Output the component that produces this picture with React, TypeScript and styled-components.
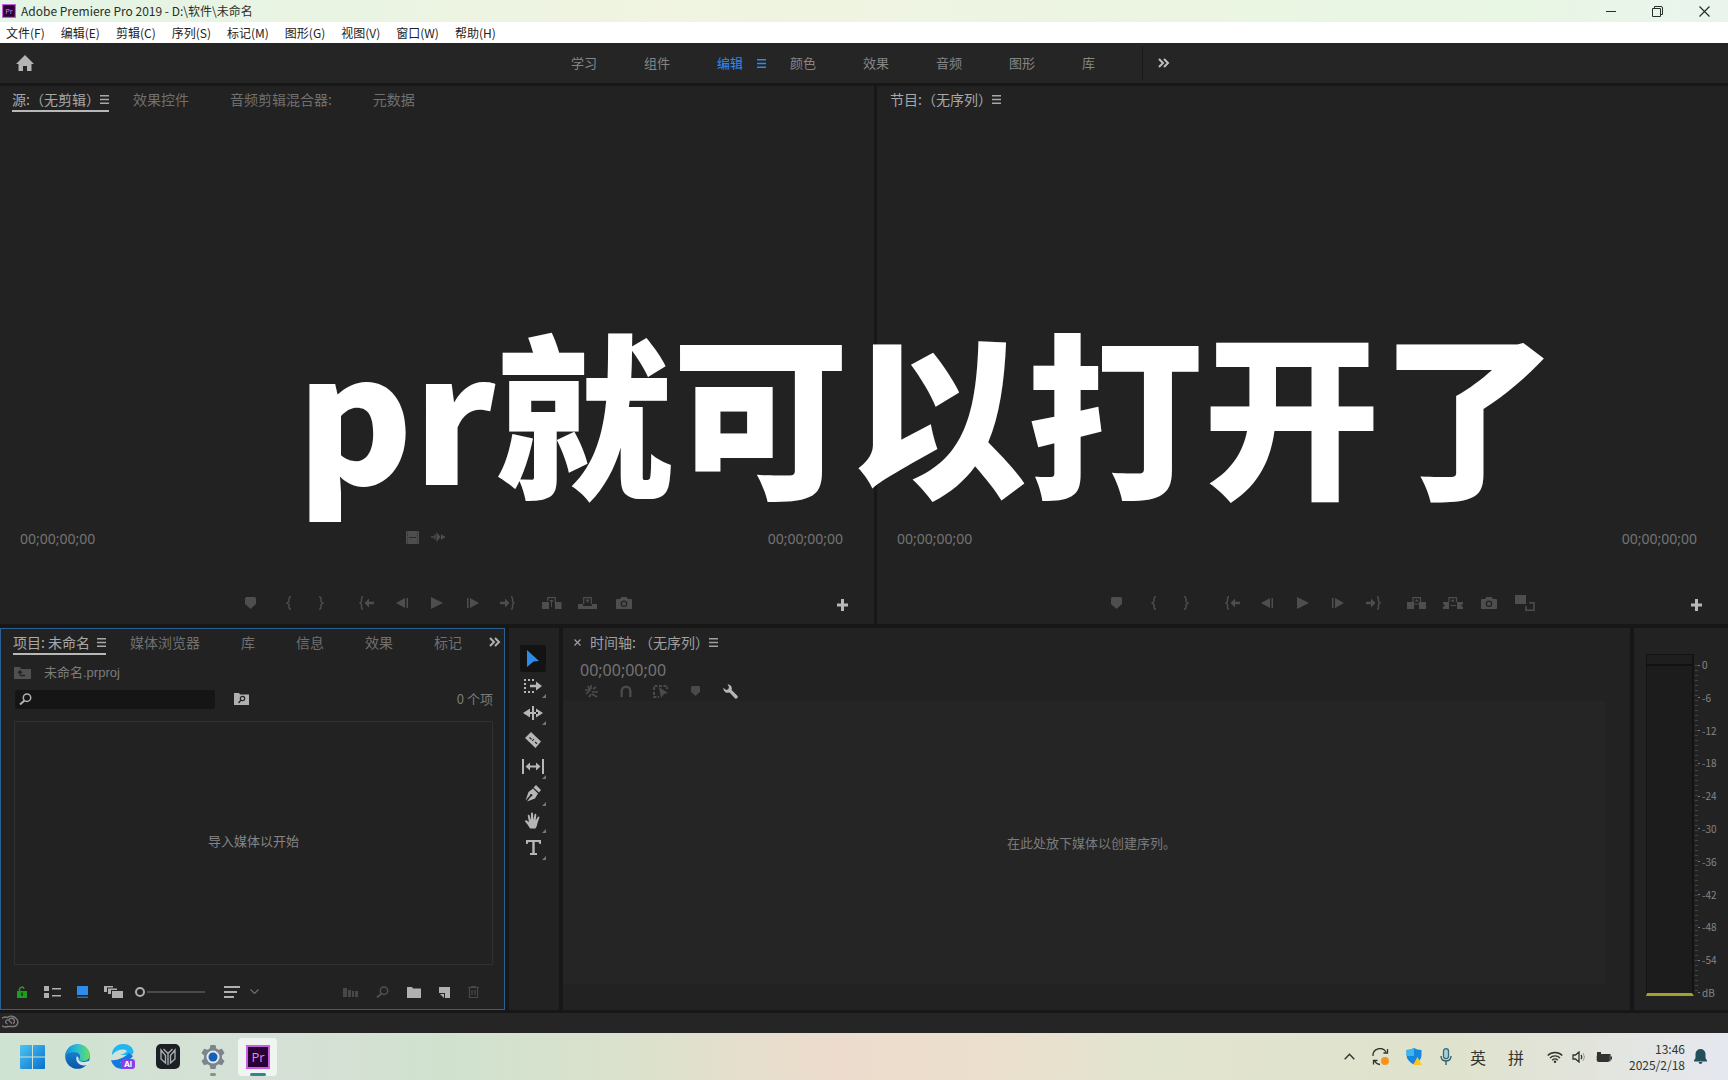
import React from 'react';
import styled, { createGlobalStyle, css } from 'styled-components';

const SANS = '"Noto Sans CJK SC", "Noto Sans", sans-serif';
const LATIN_FIRST = '"Noto Sans", "Noto Sans CJK SC", sans-serif';

const GlobalStyle = createGlobalStyle`
  * { box-sizing: border-box; }
  html, body { margin: 0; padding: 0; background: #171717; }
  body { font-family: ${SANS}; font-size: 14px; line-height: 20px; color: #8a8a8a; overflow: hidden; }
  button, input { font: inherit; color: inherit; border: 0; padding: 0; margin: 0; background: none; }
  svg { display: block; flex: none; }
`;

const Desktop = styled.div`
  position: relative;
  display: flex;
  flex-direction: column;
  width: 100%;
  height: 100vh;
`;

/* ---------- window chrome ---------- */
const TitleBar = styled.header`
  flex: none;
  display: flex;
  align-items: center;
  height: 22px;
  padding-left: 2px;
  background: linear-gradient(90deg, #e4f4e6, #f0f4e0 38%, #ecf5e2 65%, #e8f6e4 88%, #eaf4ee);
  color: #2a2e2a;
  font-size: 12px;
`;
const WindowTitle = styled.h1`
  margin: 0 0 0 5px;
  flex: 1;
  font-size: 12px;
  font-weight: 400;
  line-height: 20px;
`;
const WindowButton = styled.button`
  display: flex;
  align-items: center;
  justify-content: center;
  width: 47px;
  height: 22px;
`;
const MenuBar = styled.nav`
  flex: none;
  display: flex;
  align-items: center;
  gap: 16px;
  height: 21px;
  padding-left: 6px;
  background: #fff;
  color: #222;
  font-size: 12px;
`;
const MenuButton = styled.button`
  white-space: nowrap;
`;

/* ---------- workspace bar ---------- */
const WorkspaceBar = styled.div`
  flex: none;
  display: grid;
  grid-template-columns: 543fr 599fr 586fr;
  align-items: center;
  height: 40px;
  margin-bottom: 3px;
  background: #252525;
`;
const HomeButton = styled.button`
  width: 20px;
  height: 24px;
  margin-left: 15px;
  color: #b4b4b4;
`;
const Workspaces = styled.div`
  display: flex;
  align-items: center;
  padding-left: 28px;
  font-size: 13px;
`;
const WorkspaceTab = styled.button<{ $active?: boolean }>`
  display: flex;
  flex: none;
  align-items: center;
  gap: 14px;
  width: 73px;
  color: ${(p) => (p.$active ? '#2d8ceb' : '#858585')};
  &:last-child { width: 40px; }
`;
const WorkspaceMore = styled.button`
  display: flex;
  align-items: center;
  height: 34px;
  padding-left: 15px;
  border-left: 1px solid #1a1a1a;
  color: #c0c0c0;
`;

/* ---------- panels ---------- */
const Panel = styled.section`
  display: flex;
  flex-direction: column;
  min-width: 0;
  background: #222;
`;
const MonitorRow = styled.div`
  flex: 538 1 0;
  display: grid;
  grid-template-columns: 874fr 851fr;
  gap: 3px;
  min-height: 0;
`;
const EditRow = styled.div`
  flex: 382 1 0;
  display: grid;
  grid-template-columns: minmax(0, 505fr) 50px minmax(0, 1067fr) 94px;
  column-gap: 4px;
  min-height: 0;
  margin: 4px 0 3px;
`;
const PanelTabs = styled.div<{ $inset?: number }>`
  flex: none;
  display: flex;
  align-items: flex-start;
  gap: 24px;
  height: 27px;
  padding-left: ${(p) => p.$inset ?? 12}px;
`;
const PanelTab = styled.button<{ $active?: boolean; $line?: boolean; $gap?: number }>`
  display: flex;
  align-items: center;
  gap: ${(p) => p.$gap ?? 0}px;
  height: 26px;
  padding-top: 2px;
  padding-right: ${(p) => (p.$active ? 0 : 17)}px;
  border-bottom: 2px solid ${(p) => (p.$line ? '#b8b8b8' : 'transparent')};
  color: ${(p) => (p.$active ? '#a8a8a8' : '#707070')};
  white-space: nowrap;
`;
const MoreTabs = styled.button`
  margin: 8px 3px 0 auto;
  color: #b0b0b0;
`;
const TabStrip = styled.div`
  display: flex;
  gap: 24px;
  flex: 1;
  min-width: 0;
  margin-right: -24px;
`;
const Viewer = styled.div`
  flex: 1;
`;
const TimecodeRow = styled.div`
  flex: none;
  display: grid;
  grid-template-columns: 1fr auto 1fr;
  align-items: center;
  height: 20px;
  margin: 0 31px 39px 20px;
`;
const Timecode = styled.span<{ $end?: boolean; $large?: boolean }>`
  font-family: ${LATIN_FIRST};
  font-size: ${(p) => (p.$large ? 16 : 14)}px;
  line-height: 20px;
  color: #747474;
  text-align: ${(p) => (p.$end ? 'right' : 'left')};
`;
const DragIcons = styled.div`
  display: flex;
  align-items: center;
  gap: 12px;
  padding-right: 12px;
  padding-bottom: 4px;
  color: #4e4e4e;
`;
const Transport = styled.div<{ $shift?: boolean }>`
  position: relative;
  flex: none;
  display: flex;
  justify-content: center;
  align-items: center;
  height: 30px;
  margin-bottom: 6px;
  padding-left: ${(p) => (p.$shift ? 36 : 0)}px;
  color: #4e4e4e;
`;
const TransportGroup = styled.div<{ $gap: number; $cell: number }>`
  display: grid;
  grid-auto-flow: column;
  grid-auto-columns: ${(p) => p.$cell}px;
  margin-left: ${(p) => p.$gap}px;
`;
const IconButton = styled.button`
  display: flex;
  align-items: center;
  justify-content: center;
  height: 24px;
`;
const AddButton = styled(IconButton)`
  position: absolute;
  right: 22px;
  top: 5px;
  width: 20px;
  color: #b8b8b8;
`;

/* ---------- project panel ---------- */
const ProjectPanel = styled(Panel)`
  border: 1px solid #2c5f93;
`;
const Breadcrumb = styled.div`
  flex: none;
  display: flex;
  align-items: center;
  gap: 13px;
  height: 33px;
  padding-left: 13px;
  font-family: "Liberation Sans", "Noto Sans CJK SC", sans-serif;
  font-size: 13px;
  color: #7c7c7c;
`;
const SearchRow = styled.div`
  flex: none;
  display: flex;
  align-items: center;
  height: 20px;
  margin-bottom: 12px;
  padding: 0 11px 0 14px;
`;
const SearchBox = styled.label`
  display: flex;
  align-items: center;
  gap: 4px;
  width: 200px;
  height: 19px;
  padding-left: 4px;
  border-radius: 2px;
  background: #151515;
  color: #b0b0b0;
`;
const SearchInput = styled.input`
  flex: 1;
  min-width: 0;
  height: 19px;
  font-size: 12px;
  outline: none;
`;
const FolderSearch = styled.button`
  margin-left: 19px;
  color: #b0b0b0;
`;
const ItemCount = styled.span`
  margin-left: auto;
  font-size: 13px;
  color: #7c7c7c;
`;
const BinArea = styled.div`
  flex: 1;
  display: flex;
  align-items: center;
  justify-content: center;
  margin: 0 11px 0 13px;
  padding-bottom: 4px;
  border: 1px solid #303030;
  font-size: 13px;
  color: #858585;
`;
const ProjectFooter = styled.div`
  flex: none;
  display: flex;
  align-items: center;
  height: 34px;
  margin: 10px 25px 0 15px;
  color: #b0b0b0;
`;
const FooterGroup = styled.div<{ $gap: number; $left?: number; $push?: boolean }>`
  display: flex;
  align-items: center;
  gap: ${(p) => p.$gap}px;
  margin-left: ${(p) => (p.$push ? 'auto' : `${p.$left ?? 0}px`)};
`;
const FooterButton = styled.button<{ $color?: string }>`
  color: ${(p) => p.$color ?? 'inherit'};
`;
const ZoomSlider = styled.input`
  appearance: none;
  width: 70px;
  height: 16px;
  margin-left: 12px;
  background: linear-gradient(#4a4a4a, #4a4a4a) 12px center / 58px 2px no-repeat;
  &::-webkit-slider-thumb {
    appearance: none;
    width: 10px;
    height: 10px;
    border: 2px solid #b0b0b0;
    border-radius: 50%;
    background: #222;
  }
`;

/* ---------- tools ---------- */
const ToolPanel = styled(Panel)`
  align-items: center;
  padding: 17px 2px 0 0;
`;
const ToolButton = styled.button<{ $active?: boolean; $more?: boolean }>`
  position: relative;
  display: flex;
  align-items: center;
  justify-content: center;
  width: 26px;
  height: 27px;
  border-radius: 2px;
  background: ${(p) => (p.$active ? '#131313' : 'transparent')};
  color: ${(p) => (p.$active ? '#2d8ceb' : '#b6b6b6')};
  ${(p) =>
    p.$more &&
    css`
      &::after {
        content: '';
        position: absolute;
        right: 0;
        bottom: 1px;
        border-left: 4px solid transparent;
        border-bottom: 4px solid #777;
      }
    `}
`;

/* ---------- timeline ---------- */
const TimelineHeader = styled.div`
  flex: none;
  display: flex;
  align-items: center;
  height: 28px;
  padding-left: 11px;
  color: #a0a0a0;
`;
const TimelineTitle = styled.span`
  margin-left: 9px;
`;
const TimelineTime = styled.div`
  flex: none;
  height: 25px;
  padding: 4px 0 0 17px;
`;
const TimelineTools = styled.div`
  flex: none;
  display: grid;
  grid-template-columns: repeat(5, 35px);
  height: 20px;
  padding-left: 10px;
  color: #4a4a4a;
`;
const TimelineTool = styled(IconButton)<{ $on?: boolean }>`
  height: 20px;
  color: ${(p) => (p.$on ? '#b6b6b6' : 'inherit')};
`;
const DropArea = styled.div`
  flex: 1;
  display: flex;
  align-items: center;
  justify-content: center;
  margin: 0 24px 26px 0;
  padding-left: 14px;
  background: #252525;
  font-size: 13px;
  color: #7c7c7c;
`;

/* ---------- audio meter ---------- */
const MeterPanel = styled(Panel)`
  flex-direction: row;
  padding: 26px 0 14px 12px;
`;
const MeterTrack = styled.div`
  width: 48px;
  border: 1px solid #131313;
  border-right-width: 2px;
  border-bottom: 3px solid #a4a02c;
  background: linear-gradient(#1e1e1e 9px, #111 9px, #111 11px, #1c1c1c 11px);
`;
const MeterTicks = styled.div`
  width: 3px;
  margin: 11px 0 4px 1px;
  background: repeating-linear-gradient(#444 0 1px, transparent 1px 5px);
`;
const MeterScale = styled.ol`
  list-style: none;
  display: flex;
  flex-direction: column;
  justify-content: space-between;
  margin: 4px 0 -4px;
  padding: 0;
  font-size: 10px;
  line-height: 14px;
  color: #858585;
`;
const MeterMark = styled.li`
  display: flex;
  align-items: center;
  gap: 2px;
  &::before {
    content: '';
    width: 2px;
    height: 1px;
    background: #777;
  }
`;

/* ---------- status + taskbar ---------- */
const StatusBar = styled.footer`
  flex: none;
  display: flex;
  align-items: center;
  height: 20px;
  padding: 0 0 4px 2px;
  background: #252525;
  color: #7c7c7c;
`;
const Taskbar = styled.div`
  flex: none;
  display: flex;
  align-items: center;
  height: 47px;
  padding: 0 20px 0 13px;
  background: linear-gradient(90deg, #cfe3d2, #d6e0d6 17%, #d0e2ce 26%, #dde1cc 38%, #eddccd 48%, #ecdfcd 57%, #e2e4d0 66%, #dfe3cd 84%, #e2e4dc 92%, #e6e8f0);
  color: #303430;
`;
const Apps = styled.div`
  display: flex;
  gap: 6px;
`;
const AppButton = styled.button<{ $active?: boolean; $running?: boolean }>`
  position: relative;
  display: flex;
  align-items: center;
  justify-content: center;
  width: 39px;
  height: 38px;
  border-radius: 4px;
  background: ${(p) => (p.$active ? 'rgba(255,255,255,.65)' : 'transparent')};
  ${(p) =>
    p.$running &&
    css`
      &::after {
        content: '';
        position: absolute;
        bottom: 0;
        left: calc(50% - ${p.$active ? 8 : 3}px);
        width: ${p.$active ? 16 : 6}px;
        height: 3px;
        border-radius: 2px;
        background: ${p.$active ? '#2e8792' : '#87908a'};
      }
    `}
`;
const Tray = styled.div`
  display: flex;
  align-items: center;
  margin-left: auto;
`;
const TrayButton = styled.button<{ $w: number }>`
  display: flex;
  align-items: center;
  justify-content: center;
  width: ${(p) => p.$w}px;
  height: 36px;
  font-size: 16px;
`;
const Clock = styled.button`
  width: 63px;
  margin-right: 7px;
  font-size: 12px;
  line-height: 16px;
  text-align: right;
`;

const Caption = styled.p`
  position: absolute;
  left: 0;
  right: 0;
  top: 37.8%;
  margin: 0;
  padding-left: 126px;
  transform: translateY(-50%);
  pointer-events: none;
  font-size: 177px;
  font-weight: 900;
  line-height: 1;
  text-align: center;
  white-space: nowrap;
  color: #fff;
`;

/* ---------- icons ---------- */
type IconProps = { w: number; h: number; children: React.ReactNode };
const Icon = ({ w, h, children }: IconProps) => (
  <svg width={w} height={h} viewBox={`0 0 ${w} ${h}`} fill="currentColor" aria-hidden="true">
    {children}
  </svg>
);
const line = (width = 1) => ({ fill: 'none', stroke: 'currentColor', strokeWidth: width });

const Burger = () => (
  <Icon w={9} h={9}><path d="M0 0h9v1.5H0zM0 3.7h9v1.5H0zM0 7.4h9v1.5H0z" /></Icon>
);
const Chevrons = () => (
  <Icon w={12} h={10}><path d="M1 1l4 4-4 4M6 1l4 4-4 4" {...line(2)} /></Icon>
);
const Marker = ({ s = 12 }: { s?: number }) => (
  <svg width={s - 1} height={s} viewBox="0 0 11 12" fill="currentColor" aria-hidden="true">
    <path d="M1.5 0h8Q11 0 11 1.500V7L5.500 12 0 7V1.500Q0 0 1.500 0z" />
  </svg>
);
const BraceL = () => <Icon w={6} h={14}><path d="M5 .7Q3 .7 3 3v2.500L1 7l2 1.500V11q0 2.300 2 2.300" {...line(1.4)} /></Icon>;
const BraceR = () => <Icon w={6} h={14}><path d="M1 .7Q3 .7 3 3v2.500L5 7 3 8.500V11q0 2.300-2 2.300" {...line(1.4)} /></Icon>;
const GoIn = () => (
  <Icon w={16} h={14}>
    <path d="M4 .7Q2.500 .7 2.500 3v2.500L1 7l1.500 1.500V11q0 2.300 1.500 2.300" {...line(1.4)} />
    <path d="M5.500 7L10 2.500v3.300h5v2.400h-5v3.300z" />
  </Icon>
);
const GoOut = () => (
  <Icon w={16} h={14}>
    <path d="M12 .7q1.500 0 1.500 2.300v2.500L15 7l-1.500 1.500V11q0 2.300-1.500 2.300" {...line(1.4)} />
    <path d="M10.500 7L6 2.500v3.300H1v2.400h5v3.300z" />
  </Icon>
);
const StepBack = () => <Icon w={13} h={12}><path d="M9 1v10L0 6zM10.500 1H12v10h-1.500z" /></Icon>;
const StepForward = () => <Icon w={13} h={12}><path d="M4 1v10l9-5zM1 1h1.500v10H1z" /></Icon>;
const Play = () => <Icon w={12} h={14}><path d="M0 1l12 6-12 6z" /></Icon>;
const Insert = () => (
  <Icon w={20} h={14}>
    <path d="M0 6h7v7H0zM13 6h6.500v7H13z" />
    <path d="M5.700 5V1.700h7.600V8" {...line(1.2)} />
    <path d="M7.500 4h4L9.500 7zM9 6h1v5H9z" />
  </Icon>
);
const Overwrite = () => (
  <Icon w={19} h={14}>
    <path d="M0 8h5v2h9V8h5v5H0z" />
    <path d="M5.700 8V1.700h7.600V8" {...line(1.2)} />
    <path d="M7.500 3.500h4L9.500 7z" />
  </Icon>
);
const Lift = () => (
  <Icon w={20} h={14}>
    <path d="M0 6h7v7H0zM12 6h7v7h-7z" />
    <path d="M6 6V1.700h7.500V6M7 8h6" {...line(1.2)} />
    <path d="M7.700 5.500h4L9.700 3z" />
  </Icon>
);
const Extract = () => (
  <Icon w={20} h={14}>
    <path d="M0 6h6v7H0V11l2-1.500L0 8zM14 6h6v2l-2 1.500 2 1.500v2h-6z" />
    <path d="M6 6V1.700h7.500V6M7.500 9.500H13" {...line(1.2)} />
    <path d="M7.700 5.500h4L9.700 3z" />
  </Icon>
);
const Camera = () => (
  <Icon w={16} h={12}>
    <path fillRule="evenodd" d="M1 2h3l1.500-2h5L12 2h3q1 0 1 1v8q0 1-1 1H1q-1 0-1-1V3q0-1 1-1zm7 1.500a3.300 3.300 0 100 6.600 3.300 3.300 0 000-6.600z" />
    <circle cx="8" cy="6.800" r="2" />
  </Icon>
);
const Compare = () => (
  <Icon w={20} h={16}>
    <path d="M0 0h11v9H0z" />
    <path d="M14 7.700h5v7.500h-8V11" {...line(1.5)} />
  </Icon>
);
const Plus = () => <Icon w={11} h={12}><path d="M4 0h3v4.500h4v3H7V12H4V7.500H0v-3h4z" /></Icon>;
const Film = () => (
  <Icon w={13} h={13}>
    <path d="M0 0h13v13H0z" />
    <path d="M1.500 0v13M11.500 0v13" stroke="#333" strokeWidth="1" strokeDasharray="1 1" />
    <path d="M3 6.500h7" stroke="#2a2a2a" />
  </Icon>
);
const Wave = () => (
  <Icon w={14} h={10}><path d="M0 5h3M4 2.500v5M13 5h1" {...line(1.4)} /><path d="M5.500 0l4 5-4 5zM10 2l4 3-4 3z" /></Icon>
);
const Magnifier = () => (
  <Icon w={13} h={12}><circle cx="8" cy="4.700" r="3.700" {...line(1.5)} /><path d="M5.500 7.500L1 11.500" {...line(2)} /></Icon>
);

/* tools */
const Arrow = () => <Icon w={14} h={18}><path d="M1 0l12 11-5.500.5L1 17z" /></Icon>;
const TrackSelect = () => (
  <Icon w={18} h={14}>
    <path d="M0 1h11M0 13h11M1 4v8" {...line(2)} strokeDasharray="2 2" />
    <path d="M6 5.700h6V2.500L18 7l-6 4.500V8.300H6z" />
  </Icon>
);
const Ripple = () => <Icon w={20} h={14}><path d="M9 0h2v14H9zM7 2.500v9L0 7zM13 2.500v9L20 7zM5 6h10v2H5z" /></Icon>;
const Razor = () => (
  <Icon w={16} h={16}>
    <path d="M6 0l10 9.500L10.500 16 0 6z" />
    <path d="M4.500 5.500l2 1.700m3.500 2.800l2 1.700M7.300 9l1.600-2" stroke="#222" strokeWidth="1.200" />
  </Icon>
);
const Slip = () => <Icon w={22} h={15}><path d="M0 0h2v15H0zM20 0h2v15h-2zM3.500 7.500L8 3.500v3h6v-3l4.500 4-4.500 4v-3H8v3z" /></Icon>;
const Pen = () => (
  <Icon w={17} h={17}>
    <path d="M11 0l5 5-2 2.500-5.500-5zM8 3.500l5 5-3 5L2 16.500l4-5a1.200 1.200 0 10-1-.9l-4.500 5 3-8.600z" />
  </Icon>
);
const Hand = () => (
  <Icon w={16} h={17}>
    <path d="M5 16.500C4 14 1.500 11.500 0 9.500 0 8 1.500 8 2.500 9L4 10.300 2.800 4c-.2-1.300 1.400-1.600 1.700-.4L5.800 8 6 1.500C6 0 7.900 0 8 1.500L8.300 8l1.200-5.500c.4-1.300 2-1 1.800.4L10.700 8.500l2-3.500c.7-1.100 2.100-.4 1.600.8L12.500 11c-.5 2.500-1 4-2 5.500z" />
  </Icon>
);
const TypeTool = () => <Icon w={15} h={15}><path d="M0 0h15v4h-1.500L12.500 2H8.700v11H11v2H4v-2h2.300V2H2.500L1.500 4H0z" /></Icon>;

/* timeline */
const Nest = () => (
  <Icon w={14} h={13}><path d="M1 5h5M4 1l2 4-4 4M7 0v4M9 4l3-2M8 7h6M8 9l5 3M5 12l2-3" {...line(1.7)} /></Icon>
);
const Magnet = () => <Icon w={12} h={12}><path d="M1.700 12V6a4.300 4.300 0 018.600 0v6" {...line(2.4)} /></Icon>;
const Linked = () => (
  <Icon w={15} h={13}>
    <path d="M1 5V1h13v3M1 7v5h5" {...line(2)} strokeDasharray="3 1.500" />
    <path d="M6 2l9 6-4 1-3 4z" />
  </Icon>
);
const Wrench = () => (
  <Icon w={15} h={15}><path d="M4.500.3A4.300 4.300 0 018.600 6l6 6q.6 1-.4 2t-2 .4l-5.600-6A4.300 4.300 0 01.5 3.800L3 6l2.300-.7L6 3z" /></Icon>
);

const transportIcons = [
  { label: '转到入点', icon: <GoIn /> },
  { label: '后退一帧', icon: <StepBack /> },
  { label: '播放', icon: <Play /> },
  { label: '前进一帧', icon: <StepForward /> },
  { label: '转到出点', icon: <GoOut /> },
];

type MonitorAction = { label: string; icon: React.ReactNode };
const TransportBar = ({ actions, shift }: { actions: MonitorAction[]; shift?: boolean }) => (
  <Transport $shift={shift}>
    <TransportGroup $gap={0} $cell={36}>
      <IconButton aria-label="添加标记"><Marker /></IconButton>
    </TransportGroup>
    <TransportGroup $gap={4} $cell={32}>
      <IconButton aria-label="标记入点"><BraceL /></IconButton>
      <IconButton aria-label="标记出点"><BraceR /></IconButton>
    </TransportGroup>
    <TransportGroup $gap={13} $cell={35}>
      {transportIcons.map((t) => <IconButton key={t.label} aria-label={t.label}>{t.icon}</IconButton>)}
    </TransportGroup>
    <TransportGroup $gap={9} $cell={36}>
      {actions.map((t) => <IconButton key={t.label} aria-label={t.label}>{t.icon}</IconButton>)}
    </TransportGroup>
    <AddButton aria-label="按钮编辑器"><Plus /></AddButton>
  </Transport>
);

const menus = ['文件(F)', '编辑(E)', '剪辑(C)', '序列(S)', '标记(M)', '图形(G)', '视图(V)', '窗口(W)', '帮助(H)'];
const workspaces = ['学习', '组件', '编辑', '颜色', '效果', '音频', '图形', '库'];
const levels = ['0', '-6', '-12', '-18', '-24', '-30', '-36', '-42', '-48', '-54', 'dB'];
const projectTabs = ['媒体浏览器', '库', '信息', '效果', '标记'];
const tools = [
  { label: '选择工具', icon: <Arrow />, active: true },
  { label: '向前选择轨道工具', icon: <TrackSelect />, more: true },
  { label: '波纹编辑工具', icon: <Ripple />, more: true },
  { label: '剃刀工具', icon: <Razor /> },
  { label: '外滑工具', icon: <Slip />, more: true },
  { label: '钢笔工具', icon: <Pen />, more: true },
  { label: '手形工具', icon: <Hand />, more: true },
  { label: '文字工具', icon: <TypeTool />, more: true },
];

const PrLogo = ({ size }: { size: number }) => (
  <svg width={size} height={size} viewBox="0 0 24 24" aria-hidden="true">
    <rect x="1" y="1" width="22" height="22" fill="#2a0035" stroke="#c65fe0" strokeWidth="2" />
    <text x="12" y="16.500" textAnchor="middle" fontFamily="Open Sans, sans-serif" fontSize="13" fill="#dc88f5">Pr</text>
  </svg>
);

const SourceMonitor = () => (
  <Panel>
    <PanelTabs>
      <PanelTab $active $line>源:（无剪辑）<Burger /></PanelTab>
      <PanelTab>效果控件</PanelTab>
      <PanelTab>音频剪辑混合器:</PanelTab>
      <PanelTab>元数据</PanelTab>
    </PanelTabs>
    <Viewer />
    <TimecodeRow>
      <Timecode>00;00;00;00</Timecode>
      <DragIcons><Film /><Wave /></DragIcons>
      <Timecode $end>00;00;00;00</Timecode>
    </TimecodeRow>
    <TransportBar
      actions={[
        { label: '插入', icon: <Insert /> },
        { label: '覆盖', icon: <Overwrite /> },
        { label: '导出帧', icon: <Camera /> },
      ]}
    />
  </Panel>
);

const ProgramMonitor = () => (
  <Panel>
    <PanelTabs $inset={13}>
      <PanelTab $active>节目:（无序列）<Burger /></PanelTab>
    </PanelTabs>
    <Viewer />
    <TimecodeRow>
      <Timecode>00;00;00;00</Timecode>
      <span />
      <Timecode $end>00;00;00;00</Timecode>
    </TimecodeRow>
    <TransportBar
      shift
      actions={[
        { label: '提升', icon: <Lift /> },
        { label: '提取', icon: <Extract /> },
        { label: '导出帧', icon: <Camera /> },
        { label: '比较视图', icon: <Compare /> },
      ]}
    />
  </Panel>
);

const Project = () => (
  <ProjectPanel>
    <PanelTabs>
      <TabStrip>
        <PanelTab $active $line $gap={7}>项目: 未命名<Burger /></PanelTab>
        {projectTabs.map((t) => <PanelTab key={t}>{t}</PanelTab>)}
      </TabStrip>
      <MoreTabs aria-label="更多面板"><Chevrons /></MoreTabs>
    </PanelTabs>
    <Breadcrumb>
      <Icon w={17} h={12}>
        <path d="M0 0h6l1 2h10v10H0z" fill="#505050" />
        <path d="M6 8V4M4 6l2-2 2 2M6 8.500h5" stroke="#222" strokeWidth="1.300" fill="none" />
      </Icon>
      未命名.prproj
    </Breadcrumb>
    <SearchRow>
      <SearchBox><Magnifier /><SearchInput aria-label="搜索" /></SearchBox>
      <FolderSearch aria-label="从查询创建新的搜索素材箱">
        <Icon w={15} h={12}>
          <path d="M0 0h5l1 1.500h9V12H0z" />
          <circle cx="8.500" cy="5.500" r="2.200" fill="none" stroke="#222" strokeWidth="1.200" />
          <path d="M7 7L4.500 10" stroke="#222" strokeWidth="1.300" />
        </Icon>
      </FolderSearch>
      <ItemCount>0 个项</ItemCount>
    </SearchRow>
    <BinArea>导入媒体以开始</BinArea>
    <ProjectFooter>
      <FooterGroup $gap={16}>
        <FooterButton $color="#1f9a22" aria-label="项目可写">
          <Icon w={12} h={12}>
            <path d="M3.500 6V3.500a2.300 2.300 0 014.500-.7" {...line(1.6)} />
            <path fillRule="evenodd" d="M1 5h10v7H1zm4.300 1.500v3.500h1.400V6.500z" />
          </Icon>
        </FooterButton>
        <FooterButton aria-label="列表视图">
          <Icon w={17} h={12}><path d="M0 0h5v5H0zM0 7h5v5H0zM8 2h9v1.500H8zM8 9h9v1.500H8z" /></Icon>
        </FooterButton>
        <FooterButton $color="#2d8ceb" aria-label="图标视图">
          <Icon w={11} h={12}><path d="M0 0h11v9H0z" /><path d="M0 10.500h11V12H0z" opacity=".7" /></Icon>
        </FooterButton>
        <FooterButton aria-label="自由变换视图">
          <Icon w={19} h={12}>
            <path d="M0 0h9v1.500H3V6H0zM4 2.500h9V4H7v4H4zM8 5h11v7H8z" />
          </Icon>
        </FooterButton>
      </FooterGroup>
      <ZoomSlider type="range" min={0} max={100} defaultValue={0} aria-label="调整图标和缩览图的大小" />
      <FooterGroup $gap={10} $left={19}>
        <FooterButton aria-label="排序图标">
          <Icon w={16} h={12}><path d="M0 0h16v2H0zM0 5h13v2H0zM0 10h10v2H0z" /></Icon>
        </FooterButton>
        <FooterButton $color="#707070" aria-label="排序选项">
          <Icon w={9} h={6}><path d="M.5 .5l4 4 4-4" {...line(1.2)} /></Icon>
        </FooterButton>
      </FooterGroup>
      <FooterGroup $gap={18} $push>
        <FooterButton $color="#484848" aria-label="自动匹配序列">
          <Icon w={15} h={9}><path d="M0 0h4v9H0zM5 2h3v7H5zM9 3h2v6H9zM12 3h3v6h-3z" /></Icon>
        </FooterButton>
        <FooterButton $color="#505050" aria-label="查找"><Magnifier /></FooterButton>
        <FooterButton aria-label="新建素材箱">
          <Icon w={14} h={11}><path d="M0 0h5l1 1.500h8V11H0z" /></Icon>
        </FooterButton>
        <FooterButton aria-label="新建项">
          <Icon w={11} h={11}><path d="M0 0h11v11H6V6H0zM1 7h4v4z" /></Icon>
        </FooterButton>
        <FooterButton $color="#484848" aria-label="清除">
          <Icon w={11} h={12}><path d="M0 1.500h11M3.500 1.500V.5h4v1M1.500 2v9.500h8V2M4 4v5M7 4v5" {...line(1.2)} /></Icon>
        </FooterButton>
      </FooterGroup>
    </ProjectFooter>
  </ProjectPanel>
);

const Timeline = () => (
  <Panel>
    <TimelineHeader>
      <IconButton aria-label="关闭"><Icon w={7} h={7}><path d="M.5 .5l6 6M6.500 .5l-6 6" {...line(1.2)} /></Icon></IconButton>
      <TimelineTitle>时间轴: （无序列）</TimelineTitle>
      <Burger />
    </TimelineHeader>
    <TimelineTime><Timecode $large>00;00;00;00</Timecode></TimelineTime>
    <TimelineTools>
      <TimelineTool aria-label="嵌套"><Nest /></TimelineTool>
      <TimelineTool aria-label="对齐"><Magnet /></TimelineTool>
      <TimelineTool aria-label="链接选择项"><Linked /></TimelineTool>
      <TimelineTool aria-label="添加标记"><Marker s={10} /></TimelineTool>
      <TimelineTool $on aria-label="时间轴显示设置"><Wrench /></TimelineTool>
    </TimelineTools>
    <DropArea>在此处放下媒体以创建序列。</DropArea>
  </Panel>
);

export default function App() {
  return (
    <>
      <GlobalStyle />
      <Desktop>
        <TitleBar>
          <PrLogo size={14} />
          <WindowTitle>Adobe Premiere Pro 2019 - D:\软件\未命名</WindowTitle>
          <WindowButton aria-label="最小化"><Icon w={10} h={10}><path d="M0 5h10v1H0z" /></Icon></WindowButton>
          <WindowButton aria-label="还原">
            <Icon w={11} h={11}><path d="M.5 2.500h8v8h-8zM2.500 2V.5h6.500q1.500 0 1.500 1.500v6.500H9" {...line(1)} /></Icon>
          </WindowButton>
          <WindowButton aria-label="关闭"><Icon w={11} h={11}><path d="M.5 .5l10 10M10.500 .5l-10 10" {...line(1.2)} /></Icon></WindowButton>
        </TitleBar>
        <MenuBar>{menus.map((m) => <MenuButton key={m}>{m}</MenuButton>)}</MenuBar>
        <WorkspaceBar>
          <HomeButton aria-label="主页">
            <Icon w={20} h={20}><path d="M10 2l9 9h-2.500v7H12v-5H8v5H3.500v-7H1z" /></Icon>
          </HomeButton>
          <Workspaces>
            {workspaces.map((w) => (
              <WorkspaceTab key={w} $active={w === '编辑'}>
                {w}
                {w === '编辑' && <Burger />}
              </WorkspaceTab>
            ))}
          </Workspaces>
          <WorkspaceMore aria-label="更多工作区"><Chevrons /></WorkspaceMore>
        </WorkspaceBar>
        <MonitorRow>
          <SourceMonitor />
          <ProgramMonitor />
        </MonitorRow>
        <EditRow>
          <Project />
          <ToolPanel>
            {tools.map((t) => (
              <ToolButton key={t.label} aria-label={t.label} $active={t.active} $more={t.more}>{t.icon}</ToolButton>
            ))}
          </ToolPanel>
          <Timeline />
          <MeterPanel>
            <MeterTrack />
            <MeterTicks />
            <MeterScale>{levels.map((l) => <MeterMark key={l}>{l}</MeterMark>)}</MeterScale>
          </MeterPanel>
        </EditRow>
        <StatusBar>
          <Icon w={17} h={14}>
            <path d="M5.500 12.500a5 5 0 110-9A6 6 0 0114 4.500a4.500 4.500 0 01-1.500 8z" {...line(1.4)} />
            <path d="M10 9.500L6.500 6a2 2 0 10-1 3.800M7 5.500a3 3 0 114 4.300" {...line(1.3)} />
          </Icon>
        </StatusBar>
        <Taskbar>
          <Apps>
            <AppButton aria-label="开始">
              <svg width="25" height="24" viewBox="0 0 25 24" aria-hidden="true">
                <defs><linearGradient id="win" x1="0" y1="0" x2="1" y2="1"><stop stopColor="#4cc4f4" /><stop offset="1" stopColor="#0671cc" /></linearGradient></defs>
                <path d="M1 0h11v11.500H0V1q0-1 1-1zM13 0h11q1 0 1 1v10.500H13zM0 12.500h12V24H1q-1 0-1-1zM13 12.500h12V23q0 1-1 1H13z" fill="url(#win)" />
              </svg>
            </AppButton>
            <AppButton aria-label="Microsoft Edge">
              <svg width="25" height="25" viewBox="0 0 25 25" aria-hidden="true">
                <defs>
                  <linearGradient id="edgeTop"><stop stopColor="#1a8fd8" /><stop offset=".5" stopColor="#2cc0d0" /><stop offset="1" stopColor="#6ade5c" /></linearGradient>
                  <linearGradient id="edgeLow" x1="0" y1="0" x2="0" y2="1"><stop stopColor="#1795dd" /><stop offset="1" stopColor="#0c55a5" /></linearGradient>
                </defs>
                <circle cx="12.500" cy="12.500" r="12.300" fill="url(#edgeLow)" />
                <path d="M.3 12C1 5 6 .2 12.500 .2S25 5 24.800 11c0 4-3 6-6.500 6-3 0-4.500-1-4-2 1.500-2 1-6-3-6.500C6 7.500 1.500 9 .3 12z" fill="url(#edgeTop)" />
                <path d="M12 12c-2 3 0 9 6.500 9.500 2.500 0 4-.8 5-1.800C25 17 24 17 22.500 17.300c-6 2-10-1-8.700-3z" fill="#e9f4ee" opacity=".9" />
              </svg>
            </AppButton>
            <AppButton aria-label="AI 浏览器">
              <svg width="24" height="25" viewBox="0 0 24 25" aria-hidden="true">
                <path d="M1 11C1 4 6 0 12 0s10 3 10.500 8c0 2-2 3-4.500 3H9c3-1 6-2 7-4C12 4 5 6 1 11z" fill="#1fb6f2" />
                <path d="M0 16c5 1 13-2 18-7l4 3c-3 4-8 6-13 6 2 2 5 2.500 9 1.500v4C10 27 2 24 0 16z" fill="#1478e0" />
                <rect x="10" y="15" width="14" height="10" rx="3" fill="#8b3fe8" />
                <text x="17" y="23" textAnchor="middle" fontFamily="Inter, sans-serif" fontWeight="700" fontSize="8" fill="#fff">AI</text>
              </svg>
            </AppButton>
            <AppButton aria-label="应用">
              <svg width="24" height="25" viewBox="0 0 24 25" aria-hidden="true">
                <rect width="24" height="25" rx="5" fill="#1c2024" />
                <path d="M5 6v9l4.500 4v-7.500zM19 6v9l-4.500 4v-7.500zM12 10v11M7.500 5L12 9.500 16.500 5" fill="none" stroke="#a4aab0" strokeWidth="1.400" />
              </svg>
            </AppButton>
            <AppButton $running aria-label="设置">
              <svg width="26" height="26" viewBox="0 0 26 26" aria-hidden="true">
                <path d="M10.500 1h5l.8 3.500 2.200 1.200L22 4.700l2.500 4.200L22 11.500v3l2.500 2.600-2.500 4.200-3.500-1-2.200 1.200-.8 3.500h-5l-.8-3.500-2.200-1.200-3.500 1-2.500-4.200L4 14.500v-3L1.500 8.900 4 4.700l3.500 1 2.200-1.200z" fill="#7d858c" />
                <circle cx="13" cy="13" r="6.500" fill="#e3eaf0" />
                <circle cx="13" cy="13" r="4.500" fill="#1560b0" />
              </svg>
            </AppButton>
            <AppButton $active $running aria-label="Adobe Premiere Pro"><PrLogo size={24} /></AppButton>
          </Apps>
          <Tray>
            <TrayButton $w={32} aria-label="显示隐藏的图标"><Icon w={11} h={7}><path d="M.7 6.300l4.800-5 4.800 5" {...line(1.4)} /></Icon></TrayButton>
            <TrayButton $w={32} aria-label="更新">
              <Icon w={18} h={18}>
                <path d="M1 8a7 7 0 0113-4M15.500 1v4h-4M1.500 16.500v-4h4M2.500 13A7 7 0 008 16.500" {...line(1.3)} />
                <circle cx="13" cy="13" r="4" fill="#f7941d" />
              </Icon>
            </TrayButton>
            <TrayButton $w={33} aria-label="Windows 安全中心">
              <Icon w={16} h={17}>
                <path d="M8 0q3 2 7.500 2v5q0 6-7.500 9.500Q.5 13 .5 7V2Q5 2 8 0z" fill="#1687dc" />
                <path d="M8 0v8H.5V2Q5 2 8 0z" fill="#3db5ee" />
                <path d="M11.500 9l4.500 8H7z" fill="#fcc520" />
              </Icon>
            </TrayButton>
            <TrayButton $w={32} aria-label="麦克风">
              <Icon w={12} h={17}>
                <rect x="3.500" y=".7" width="5" height="10" rx="2.500" fill="#a9cdd6" stroke="#2d6b7c" strokeWidth="1.300" />
                <path d="M1 8q0 5 5 5t5-5M6 13v4" fill="none" stroke="#2d5560" strokeWidth="1.300" />
              </Icon>
            </TrayButton>
            <TrayButton $w={32}>英</TrayButton>
            <TrayButton $w={44}>拼</TrayButton>
            <TrayButton $w={34} aria-label="网络">
              <Icon w={16} h={12}>
                <path d="M.7 4.500a10.500 10.500 0 0114.600 0M3 7a7 7 0 0110 0M5.200 9.200a4 4 0 015.600 0" {...line(1.4)} />
                <circle cx="8" cy="10.800" r="1.200" />
              </Icon>
            </TrayButton>
            <TrayButton $w={14} aria-label="音量">
              <Icon w={14} h={12}>
                <path d="M1 4h2.500L7 1v10L3.500 8H1zM9 4q1.500 2 0 4" {...line(1.3)} />
                <path d="M11 2q3 4 0 8" {...line(1)} opacity=".4" />
              </Icon>
            </TrayButton>
            <TrayButton $w={36} aria-label="电池">
              <Icon w={17} h={13}>
                <rect x=".7" y="4" width="13" height="8" rx="2" />
                <path d="M3 0v4M1 2h4v4H1zM14.500 6.500H16v3h-1.500z" />
                <path d="M6 4.700h8v6.600" {...line(1.2)} />
              </Icon>
            </TrayButton>
            <Clock>13:46<br />2025/2/18</Clock>
            <TrayButton $w={16} aria-label="通知">
              <svg width="13" height="15" viewBox="0 0 13 15" aria-hidden="true">
                <path d="M6.500 0a5 5 0 015 5v4l1.500 2.500v1H0v-1L1.500 9V5a5 5 0 015-5zM4.500 13h4q-.5 2-2 2t-2-2z" fill="#24505c" />
              </svg>
            </TrayButton>
          </Tray>
        </Taskbar>
        <Caption>pr就可以打开了</Caption>
      </Desktop>
    </>
  );
}
